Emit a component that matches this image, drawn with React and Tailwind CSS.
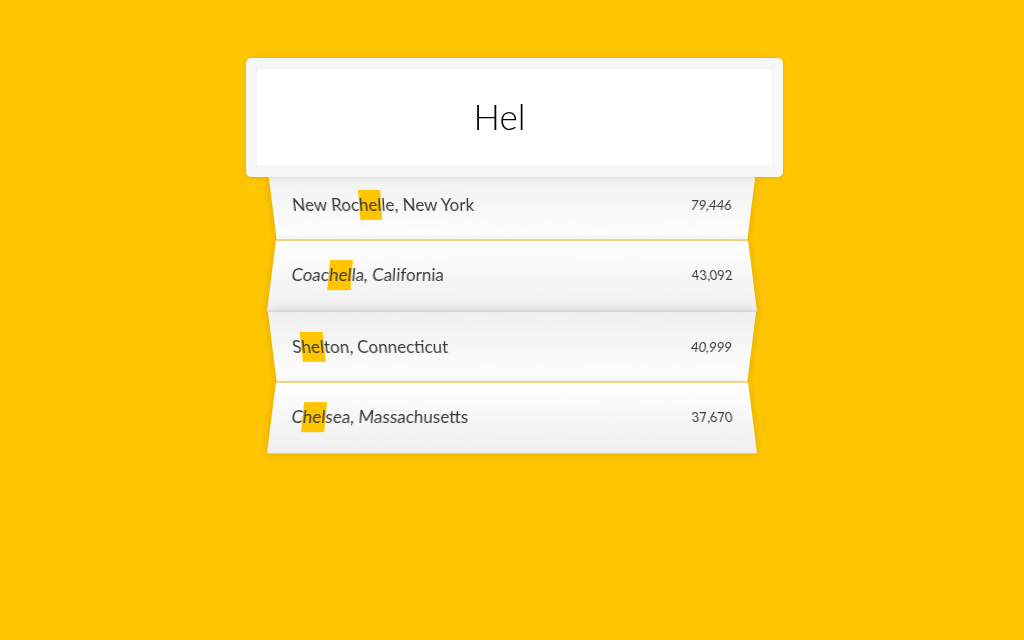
import React from "react";

const items = [
  { pre: "New Roc", hl: "hel", post: "le, New York", pop: "79,446" },
  { pre: "Coac", hl: "hel", post: "la, California", pop: "43,092" },
  { pre: "S", hl: "hel", post: "ton, Connecticut", pop: "40,999" },
  { pre: "C", hl: "hel", post: "sea, Massachusetts", pop: "37,670" },
];

export default function App() {
  return (
    <div
      className="min-h-[640px] w-full bg-[#ffc600] pt-[58px]"
      style={{ fontFamily: "Lato, 'Open Sans', sans-serif" }}
    >
      <div className="mx-auto w-[480px]">
        <div className="relative z-10 ml-[-26px] h-[119px] w-[537px] rounded-[5px] border-[10px] border-[#F7F7F7] bg-white shadow-[0_0_5px_rgba(0,0,0,0.12),inset_0_0_2px_rgba(0,0,0,0.19)] flex items-center justify-center pr-[30px]">
          <span className="text-[35px] font-light leading-none text-black mt-[-2px]">Hel</span>
        </div>
        <ul className="relative mt-[-10px]">
          {items.map((it, i) => (
            <li
              key={i}
              className={
                i % 2 === 0
                  ? "flex justify-between items-center px-[20px] py-[20px] border-b border-[#D8D8D8] shadow-[0_0_10px_rgba(0,0,0,0.14)] bg-[linear-gradient(to_top,#ffffff_0%,#EFEFEF_100%)] [transform:perspective(100px)_rotateX(-3deg)_translateY(3px)]"
                  : "flex justify-between items-center px-[20px] py-[20px] border-b border-[#D8D8D8] shadow-[0_0_10px_rgba(0,0,0,0.14)] bg-[linear-gradient(to_bottom,#ffffff_0%,#EFEFEF_100%)] [transform:perspective(100px)_rotateX(3deg)_translateY(2px)_scale(1.001)]"
              }
            >
              <span className="h-[30px] leading-[30px] text-[17px] text-[#3a3a3a] whitespace-pre">
                {it.pre}
                <span className="inline-block bg-[#ffc600] leading-[30px]">{it.hl}</span>
                {it.post}
              </span>
              <span className="text-[13px] leading-[30px] text-[#3a3a3a]">{it.pop}</span>
            </li>
          ))}
        </ul>
      </div>
    </div>
  );
}
